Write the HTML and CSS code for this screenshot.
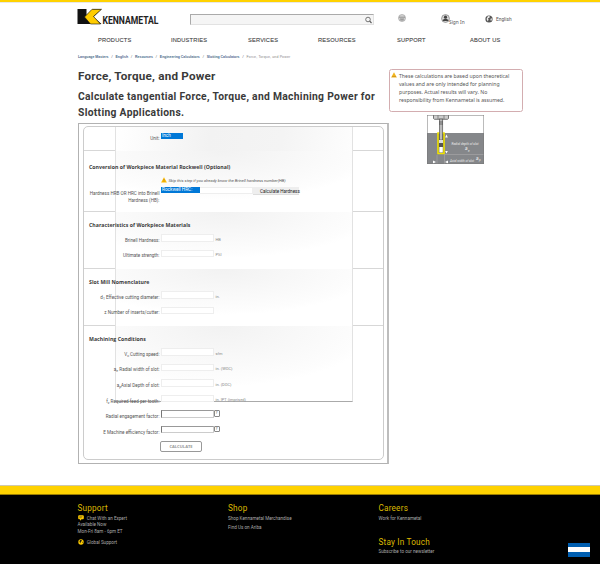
FILE: index.html
```html
<!DOCTYPE html>
<html lang="en">
<head>
<meta charset="utf-8">
<title>Force, Torque, and Power</title>
<link rel="stylesheet" href="styles.css">
</head>
<body>
<header>
  <div class="topbar">
    <svg class="logo" width="84" height="18" viewBox="0 0 84 18">
      <path d="M0.500 1h9v6l7-6h8l-8 8 8 7H0.500z" fill="#111"/>
      <path d="M15 1.300h9.500l-8 7.200 7 7.500H13.500L7.500 9z" fill="#fc0" stroke="#111" stroke-width=".6"/>
      <text x="25.500" y="16" textLength="56" lengthAdjust="spacingAndGlyphs" class="logo-text">KENNAMETAL</text>
    </svg>
    <div class="search">
      <svg width="8" height="8" viewBox="0 0 8 8" fill="none" stroke="#555"><circle cx="4" cy="3.500" r="2.300" stroke-width=".8"/><path d="M5.700 5.200l1.800 1.800" stroke-width="1.100"/></svg>
    </div>
    <svg class="cart" width="8" height="8" viewBox="0 0 8 8"><circle cx="4" cy="4" r="3.500" fill="#d4d4d4" stroke="#999" stroke-width=".6"/><path d="M1 3.200h6M2 5h4M2.500 6h3" stroke="#777" stroke-width=".7"/></svg>
    <svg class="user" width="9" height="9" viewBox="0 0 9 9"><circle cx="4.500" cy="4.500" r="3.900" fill="#ddd" stroke="#777" stroke-width=".7"/><circle cx="4.500" cy="3.200" r="1.600" fill="#444"/><path d="M1.700 7c0-3 5.600-3 5.600 0z" fill="#444"/></svg>
    <span class="signin">Sign In</span>
    <svg class="globe" width="8" height="8" viewBox="0 0 8 8"><circle cx="4" cy="4" r="3.600" fill="#555"/><path d="M3 1l2 .4-.6 1.400-1.600.6.8 1.200-.8 2L1.500 4zM6 3l1 1-.8 2-.9-1z" fill="#eee"/></svg>
    <span class="lang">English</span>
  </div>
  <nav><a class="n1">PRODUCTS</a><a class="n2">INDUSTRIES</a><a class="n3">SERVICES</a><a class="n4">RESOURCES</a><a class="n5">SUPPORT</a><a class="n6">ABOUT US</a></nav>
  <div class="crumbs"><b>Language Masters</b><i>/</i><b>English</b><i>/</i><b>Resources</b><i>/</i><b>Engineering Calculators</b><i>/</i><b>Slotting Calculators</b><i>/</i><span>Force, Torque, and Power</span></div>
</header>
<main>
  <div class="left">
    <h1>Force, Torque, and Power</h1>
    <h2>Calculate tangential Force, Torque, and Machining Power for<br>Slotting Applications.</h2>
    <div class="frame"><form>
      <section class="s1">
        <div class="row"><label>Unit:</label><span class="select unit">Inch</span></div>
      </section>
      <section class="s2">
        <h3>Conversion of Workpiece Material Rockwell (Optional)</h3>
        <p class="skip"><svg width="6" height="6" viewBox="0 0 6 6"><path d="M3 .3L5.900 5.600H.1z" fill="#fb0"/><path d="M3 2v1.700M3 4.300v.6" stroke="#764" stroke-width=".5"/></svg><em>Skip this step if you already know the Brinell hardness number(HB)</em></p>
        <div class="row hard"><label>Hardness HRB OR HRC into Brinell<br>Hardness (HB):</label><span class="select rock">Rockwell HRC:</span><span class="field value"></span><span class="calc">Calculate Hardness</span></div>
      </section>
      <section class="s3">
        <h3>Characteristics of Workpiece Materials</h3>
        <div class="row"><label>Brinell Hardness:</label><span class="field"></span><small>HB</small></div>
        <div class="row"><label>Ultimate strength:</label><span class="field"></span><small>PSI</small></div>
      </section>
      <section class="s4">
        <h3>Slot Mill Nomenclature</h3>
        <div class="row"><label>d<sub>1</sub> Effective cutting diameter:</label><span class="field"></span><small>in.</small></div>
        <div class="row"><label>z Number of inserts/cutter:</label><span class="field"></span></div>
      </section>
      <section class="s5">
        <h3>Machining Conditions</h3>
        <div class="row"><label>V<sub>c</sub> Cutting speed:</label><span class="field"></span><small>sfm</small></div>
        <div class="row"><label>a<sub>e</sub> Radial width of slot:</label><span class="field"></span><small>in. (WOC)</small></div>
        <div class="row"><label>a<sub>p</sub>Axial Depth of slot:</label><span class="field"></span><small>in. (DOC)</small></div>
        <div class="row"><label>f<sub>z</sub> Required feed per tooth:</label><span class="field"></span><small>in. IPT (imprised)</small></div>
        <div class="row dark"><label>Radial engagement factor:</label><span class="field"></span><span class="help">?</span></div>
        <div class="row dark"><label>E Machine efficiency factor:</label><span class="field"></span><span class="help">?</span></div>
        <span class="submit">CALCULATE</span>
      </section>
    </form></div>
  </div>
  <aside>
    <div class="notice"><svg width="6" height="6" viewBox="0 0 6 6"><path d="M3 .3L5.900 5.600H.1z" fill="#f2b51c"/><path d="M1 4.500h4" stroke="#c98e20" stroke-width=".7"/></svg><p>These calculations are based upon theoretical<br>values and are only intended for planning<br>purposes. Actual results will vary. No<br>responsibility from Kennametal is assumed.</p></div>
    <svg class="diagram" width="57" height="49" viewBox="0 0 57 49">
      <rect width="57" height="49" fill="#fff"/><rect y="18" width="57" height="31" fill="#85878a"/>
      <path d="M11 18h6v20.500h-6z" fill="#555" stroke="#f1e300" stroke-width="1.600"/>
      <path d="M6.500 0v3.500l1 .8h13l1-.8V0" fill="#ccc" stroke="#444" stroke-width=".7"/><path d="M11 0v4M17 0v4" stroke="#555" stroke-width=".6"/>
      <rect x="12.500" y="4" width="3.200" height="21" fill="#bbb" stroke="#555" stroke-width=".7"/>
      <path d="M12 7h4M12 9h4" stroke="#444" stroke-width=".7"/>
      <rect x="12" y="25" width="4" height="3" fill="#ddd"/><rect x="12.300" y="32" width="3.500" height="5.500" fill="#fff"/>
      <path d="M17 39.500h40M10 40v9M17.500 40v9" stroke="#aaa" stroke-width=".6"/>
      <path d="M19.500 19.500l1.300 3h-2.600zM19.500 38.500l1.300-2.500h-2.600zM6 45.500l3 1.500-3 1.500zM21 45.500l-3 1.500 3 1.500z" fill="#fff"/>
      <rect x=".25" y=".25" width="56.500" height="48.500" fill="none" stroke="#777" stroke-width=".5"/>
      <text x="24.500" y="29.500" textLength="27">Radial depth of slot</text><text x="38" y="35" class="big">a</text><text x="41" y="36.500">e</text>
      <text x="23" y="46.500" textLength="24">Axial width of slot</text><text x="49" y="44.500" class="big">a</text><text x="52" y="46">p</text>
    </svg>
  </aside>
</main>
<footer>
  <div class="col c1"><h4>Support</h4>
    <p><svg width="6" height="6" viewBox="0 0 6 6"><path d="M.8.300h4.400l.6.700v2.600l-.6.600H3.500L2 5.800V4.200H.8L.2 3.600V1z" fill="#fc0"/><path d="M1.300 1.700h3.200M1.300 2.700h2.400" stroke="#222" stroke-width=".4"/></svg><span>Chat With an Expert</span></p>
    <p>Available Now</p><p>Mon-Fri 8am - 6pm ET</p>
    <p class="gap"><svg width="6" height="6" viewBox="0 0 6 6"><circle cx="3" cy="3" r="2.700" fill="#fc0"/><path d="M2 1l2 .3-.7 1.200-.8.500.5 1.500-1.500-1.500zM4.500 2.500l.7.800-.7 1z" fill="#111"/></svg><span>Global Support</span></p>
  </div>
  <div class="col c2"><h4>Shop</h4><p>Shop Kennametal Merchandise</p><p class="next">Find Us on Ariba</p></div>
  <div class="col c3"><h4>Careers</h4><p>Work for Kennametal</p><h4 class="touch">Stay In Touch</h4><p>Subscribe to our newsletter</p></div>
  <div class="flag"></div>
</footer>
</body>
</html>
```

FILE: styles.css
```css
* { box-sizing: border-box; }
body { margin: 0; width: 600px; height: 564px; overflow: hidden; background: #fff; color: #555; font: 4.8px/7px "Noto Sans", "Open Sans", sans-serif; display: flex; flex-direction: column; }
h1, h2, h3, h4, p { margin: 0; }
svg { display: block; flex: none; }
header { height: 64px; flex: none; border-top: 2px solid #ffd200; box-shadow: inset 0 1px #e8e8e8; }
.topbar { display: flex; align-items: flex-start; height: 30px; padding: 6px 0 0 77px; }
.logo { overflow: visible; }
.logo-text { font: bold 10.5px Roboto, sans-serif; fill: #222; }
.search { display: flex; justify-content: flex-end; width: 184px; height: 11px; margin: 6px 0 0 29px; padding: 1px 1px; background: #f5f5f5; border: 1px solid #e2e2e2; border-top-color: #aaa; border-left-color: #aaa; }
.cart { margin: 6px 0 0 23.5px; }
.user { margin: 6px 0 0 35.5px; }
.signin { width: 36px; margin-top: 11px; margin-left: -1px; margin-right: 1px; white-space: nowrap; }
.globe { margin-top: 6.5px; margin-left: -1px; }
.lang { margin: 7.5px 0 0 3px; font-family: Roboto, sans-serif; }
nav { display: flex; padding-left: 98px; height: 17px; font: 5.7px/17px "Liberation Sans", sans-serif; color: #444; letter-spacing: .18px; -webkit-text-stroke: .1px #444; }
nav a { width: 73px; }
.n2 { width: 77px; }
.n3 { width: 70px; }
.n4 { width: 79px; }
.crumbs { display: flex; padding-left: 78px; font: 3.5px/13px "Liberation Sans", sans-serif; height: 15px; padding-top: 1.5px; white-space: nowrap; }
.crumbs b { color: #4a6a8c; font-weight: 700; letter-spacing: -.015px; }
.crumbs i { width: 7px; text-align: center; }
.crumbs span { color: #888; letter-spacing: .15px; }
main { display: flex; height: 421px; padding-left: 78px; flex: none; }
.left { width: 311px; }
h1, h2 { font-family: Roboto, sans-serif; font-weight: 700; color: #3a3a3a; white-space: nowrap; }
h1 { font-size: 11.7px; line-height: 24px; height: 25px; letter-spacing: .2px; }
h2 { font-size: 10.3px; line-height: 15.5px; height: 34px; letter-spacing: .31px; }
.frame { height: 341px; border: 1px solid #b2b2b2; border-right: 2px solid #bdbdbd; padding: 2px 4px 4px; }
form { position: relative; display: block; width: 301px; height: 333.5px; border: 1px solid #ccc; border-radius: 5px; }
section { position: relative; isolation: isolate; border-bottom: 1.5px solid #d7d7d7; }
section::before { content: ""; position: absolute; z-index: -1; left: 31px; width: 237px; top: 0; bottom: -1px; border: solid #e2e2e2; border-width: 0 1px; background: radial-gradient(ellipse 65% 80% at 45% 0, #f2f2f2, #fdfdfd 90%, #fff); }
.s1 { height: 24px; padding-top: 6px; }
.s1::before { background: linear-gradient(100deg, #fff, #f2f2f2 40%, #f4f4f4 70%, #fdfdfd); }
.s2 { height: 61px; }
.s3, .s4 { height: 57px; }
.s5 { height: 132px; border: 0; }
.s5::before { bottom: auto; height: 74.5px; border-bottom: 1px solid #aaa; }
section::before { width: 236px; }
h3 { font: bold 5.2px/7px "Open Sans", sans-serif; color: #3a3a3a; padding: 12.5px 0 0 5px; height: 23px; white-space: nowrap; letter-spacing: .03px; }
.s3 h3, .s4 h3, .s5 h3 { padding-top: 10px; height: 22px; }
.row { display: flex; align-items: flex-start; height: 15.6px; }
.row label { width: 75.5px; margin: 2.8px 1px 0 0; text-align: right; white-space: nowrap; font: 4.6px/7px Roboto, sans-serif; }
.row sub { font-size: 3.4px; line-height: 1px; vertical-align: -1px; }
.field { width: 53px; height: 7.5px; background: #fff; border: 1px solid #eee; }
.select { height: 6px; padding-left: 1.5px; background: #0078d7; color: #fff; font: 4.7px/6px Roboto, sans-serif; }
.unit { width: 22.5px; }
.s1 .row label { margin-top: 2px; }
.rock { width: 39.5px; }
.skip { display: flex; padding: 2.5px 0 0 76.5px; height: 14px; font: 4.1px/7px Roboto, sans-serif; }
.skip em { margin: 0 0 0 2px; white-space: nowrap; }
.s2 .hard { height: 20px; margin-top: -1px; }
.hard label { line-height: 7.2px; }
.value { height: 7px; border-left: 0; }
.calc { width: 46px; height: 8px; padding-left: 7px; background: #eee; border-bottom: 1px solid #ddd; font: 4.6px/9.5px Roboto, sans-serif; color: #222; white-space: nowrap; }
.row small { margin: 1.5px 0 0 2px; font: 4px/7px Roboto, sans-serif; color: #888; white-space: nowrap; }
.dark .field { border-color: #999 #ccc #ccc #777; }
.help { width: 6px; height: 6.5px; border: 1px solid #888; border-radius: 1px; font-size: 4px; line-height: 4.5px; text-align: center; }
.submit { display: block; width: 42px; height: 11px; margin: -.5px 0 0 76px; border: 1px solid #999; border-radius: 2px; text-align: center; font: bold 4.1px/9.5px "Open Sans", sans-serif; color: #999; }
aside { padding-top: 5px; }
.notice { display: flex; width: 134px; height: 43px; border: 1px solid #d3adb0; border-radius: 2.5px; padding: 2px 0 0 1px; white-space: nowrap; font-size: 5.15px; line-height: 8.2px; }
.notice p { margin: -.2px 0 0 2px; }
.diagram { margin: 3px 0 0 38px; }
.diagram text { font: italic 3.1px Roboto, sans-serif; fill: #eee; }
.diagram .big { font-size: 5px; }
footer { position: relative; display: flex; flex: 1; background: #000; border-top: 1px solid #cec9ae; padding-left: 77.5px; color: #aaa; font: 4.6px/6.7px Roboto, sans-serif; }
footer::before { content: ""; position: absolute; left: 0; right: 0; top: 0; height: 8px; background: #ffd200; border-bottom: 1px solid #9b7e00; }
.col { width: 150.5px; padding-top: 16px; }
h4 { height: 13.5px; font: 8.2px/12px Roboto, sans-serif; color: #ddb900; letter-spacing: .2px; }
.col p { display: flex; height: 6.7px; white-space: nowrap; }
.col p span { margin-left: 3.2px; }
.c1 p svg { margin-top: -.5px; }
.col .gap { margin-top: 4px; }
.col .next { margin-top: 3.3px; }
h4.touch { margin-top: 13.5px; }
.flag { position: absolute; left: 568px; top: 57px; width: 22px; height: 14px; background: linear-gradient(#005eb0 4px, #fff 4px, #fff 9px, #005eb0 9px); }
```
